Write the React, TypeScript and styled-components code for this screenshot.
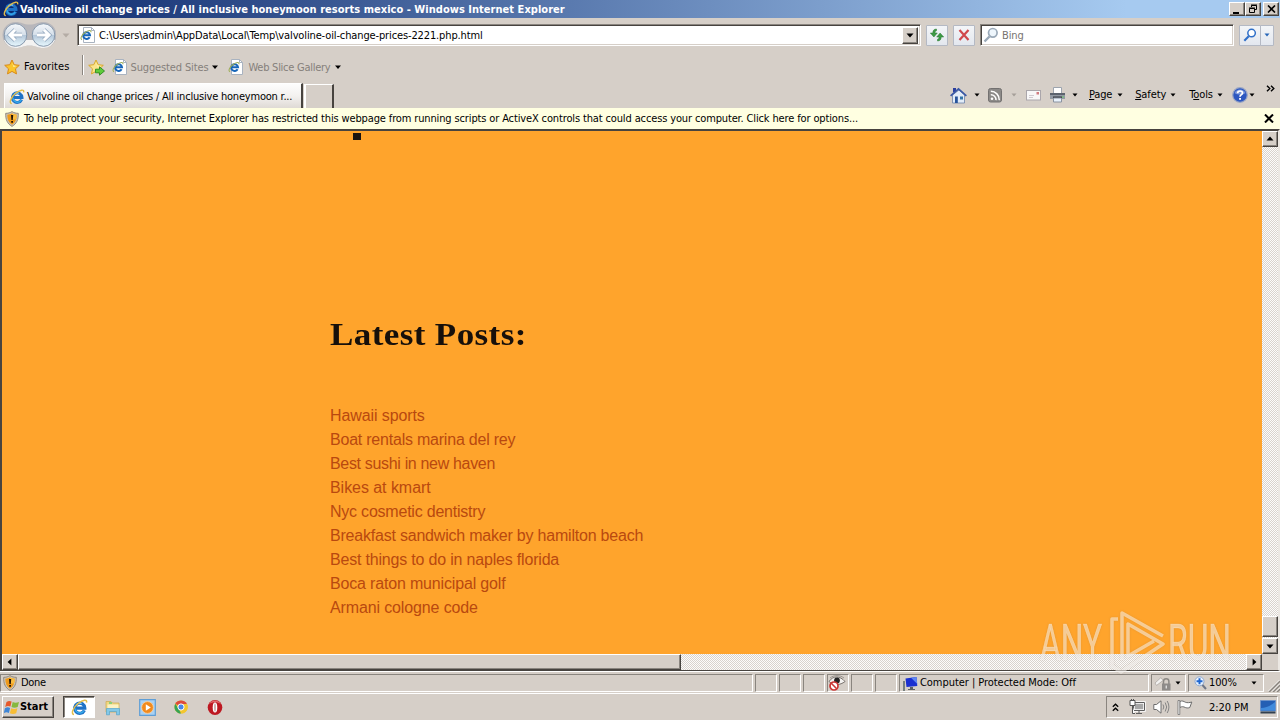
import React from "react";
import styled, { createGlobalStyle, css } from "styled-components";

const FACE = "#d6cfc8";
const DARK = "#47433f";
const MID = "#8a857f";
const UI = `"DejaVu Sans Condensed", "DejaVu Sans", sans-serif`;

const Global = createGlobalStyle`
  body { margin: 0; background: ${FACE}; overflow: hidden; }
  * { box-sizing: border-box; }
  svg { display: block; flex: none; }
`;

const Desktop = styled.div`
  position: relative;
  width: 1280px;
  height: 720px;
  overflow: hidden;
  display: flex;
  flex-direction: column;
  background: ${FACE};
  font: 11px/14px ${UI};
  color: #000;
`;

const raised = css`
  background: ${FACE};
  border: 1px solid;
  border-color: #fff ${DARK} ${DARK} #fff;
  box-shadow: inset -1px -1px 0 ${MID};
`;

const Label = styled.span<{ $ls?: number; $ml?: number; $drop?: number; $color?: string; $bold?: boolean }>`
  white-space: pre;
  flex: none;
  letter-spacing: ${(p) => p.$ls ?? -0.12}px;
  margin-left: ${(p) => p.$ml ?? 0}px;
  padding-top: ${(p) => p.$drop ?? 0}px;
  color: ${(p) => p.$color ?? "inherit"};
  font-weight: ${(p) => (p.$bold ? 700 : 400)};
`;

const Slot = styled.span<{ $ml?: number; $mt?: number }>`
  flex: none;
  margin-left: ${(p) => p.$ml ?? 0}px;
  margin-top: ${(p) => p.$mt ?? 0}px;
`;

const TitleBar = styled.div`
  height: 18px;
  flex: none;
  display: flex;
  align-items: center;
  padding: 0 1px 0 3px;
  background: linear-gradient(90deg, #0c286c 0%, #a6caf0 88%, #a6caf0 100%);
  color: #fff;
`;
const WindowButtons = styled.div`
  margin-left: auto;
  display: flex;
`;
const WindowButton = styled.div<{ $gap?: boolean }>`
  ${raised}
  width: 16px;
  height: 14px;
  margin-left: ${(p) => (p.$gap ? 2 : 0)}px;
  display: flex;
  align-items: center;
  justify-content: center;
`;

const AddressRow = styled.div`
  height: 34px;
  flex: none;
  display: flex;
  align-items: center;
  padding-left: 2px;
`;
const Field = styled.div<{ $w: number; $ml: number }>`
  width: ${(p) => p.$w}px;
  height: 22px;
  margin-left: ${(p) => p.$ml}px;
  flex: none;
  display: flex;
  align-items: center;
  background: #fff;
  border: 1px solid;
  border-color: ${MID} #fff #fff ${MID};
  box-shadow: inset 1px 1px 0 ${DARK}, inset -1px -1px 0 ${FACE};
  padding: 2px 2px 2px 2px;
`;
const DropButton = styled.div`
  ${raised}
  width: 16px;
  height: 17px;
  margin-left: auto;
  display: flex;
  align-items: center;
  justify-content: center;
`;
const NavButton = styled.div<{ $w: number; $ml: number }>`
  width: ${(p) => p.$w}px;
  height: 21px;
  margin-left: ${(p) => p.$ml}px;
  flex: none;
  display: flex;
  align-items: center;
  justify-content: center;
  background: linear-gradient(#f3f5f8, #e3e7ee);
  border: 1px solid #b4b9c4;
  border-radius: 1px;
`;

const FavoritesRow = styled.div`
  height: 30px;
  flex: none;
  display: flex;
  align-items: center;
  padding-left: 4px;
`;
const Divider = styled.div`
  width: 2px;
  height: 20px;
  margin: -4px 4px 0 8px;
  border-left: 1px solid ${MID};
  border-right: 1px solid #fff;
`;

const TabRow = styled.div`
  height: 26px;
  flex: none;
  display: flex;
  align-items: flex-end;
  padding-left: 4px;
`;
const Tab = styled.div`
  width: 299px;
  height: 25px;
  display: flex;
  align-items: center;
  padding: 1px 0 0 4px;
  background: linear-gradient(#fdfdfd, #f3f1ef 50%, #dfdad5);
  border-left: 1px solid #fff;
  border-top: 1px solid #fff;
  border-right: 2px solid ${DARK};
`;
const NewTab = styled.div`
  width: 30px;
  height: 24px;
  margin-left: 1px;
  border: 1px solid #fff;
  border-left-width: 2px;
  border-bottom: 0;
  border-right: 2px solid ${DARK};
`;
const CommandBar = styled.div`
  height: 26px;
  margin-left: 616px;
  display: flex;
  align-items: center;
`;

const InfoBar = styled.div`
  height: 21px;
  flex: none;
  display: flex;
  align-items: center;
  padding: 0 6px 0 5px;
  background: #ffffe1;
`;
const CloseMark = styled.div`
  margin-left: auto;
`;

const Viewport = styled.div`
  height: 542px;
  flex: none;
  display: grid;
  grid-template-columns: 1260px 16px;
  grid-template-rows: 523px 16px;
  border-top: 2px solid ${DARK};
  border-left: 2px solid ${DARK};
  border-right: 2px solid #ece8e3;
  border-bottom: 1px solid ${DARK};
`;
const Page = styled.div`
  background: #ffa42c;
  padding-left: 328px;
  overflow: hidden;
`;
const Bullet = styled.div`
  width: 8px;
  height: 7px;
  margin: 2px 0 0 23px;
  background: #1a1410;
`;
const Heading = styled.h2`
  width: max-content;
  margin: 175px 0 0;
  font: bold 31.5px/40px "Liberation Serif", Georgia, serif;
  letter-spacing: 0.35px;
  transform: scaleX(1.112);
  transform-origin: left;
  color: #17100b;
  white-space: nowrap;
`;
const Posts = styled.div`
  margin-top: 49px;
  display: flex;
  flex-direction: column;
  font: 16px/24px "Liberation Sans", Arial, sans-serif;
`;
const Post = styled.a<{ $ls: number }>`
  letter-spacing: ${(p) => p.$ls}px;
  color: #b9490f;
  white-space: nowrap;
`;

const Track = styled.div<{ $vertical?: boolean }>`
  display: flex;
  flex-direction: ${(p) => (p.$vertical ? "column" : "row")};
  background: conic-gradient(#fdfcfb 25%, #d9d3cd 0 50%, #fdfcfb 0 75%, #d9d3cd 0) 0 0 / 2px 2px;
`;
const ScrollPiece = styled.div<{ $w?: number; $h?: number; $before?: number }>`
  ${raised}
  flex: none;
  width: ${(p) => p.$w ?? 16}px;
  height: ${(p) => p.$h ?? 16}px;
  margin-top: ${(p) => p.$before ?? 0}px;
  display: flex;
  align-items: center;
  justify-content: center;
`;
const Spacer = styled.div`
  flex: 1;
`;

const StatusBar = styled.div`
  height: 23px;
  flex: none;
  display: flex;
  gap: 2px;
  padding: 2px 0 1px;
  border-top: 1px solid #fff;
  border-bottom: 1px solid #fff;
`;
const Pane = styled.div<{ $w: number }>`
  width: ${(p) => p.$w}px;
  height: 18px;
  flex: none;
  display: flex;
  align-items: center;
  border: 1px solid;
  border-color: ${MID} #fff #fff ${MID};
  padding-left: 2px;
`;

const TaskBar = styled.div`
  flex: 1;
  display: flex;
  align-items: flex-start;
  padding: 2px 2px 0;
`;
const StartButton = styled.div`
  ${raised}
  width: 52px;
  height: 22px;
  display: flex;
  align-items: center;
  padding-left: 1px;
`;
const ActiveTask = styled.div`
  width: 32px;
  height: 22px;
  margin-left: 9px;
  display: flex;
  align-items: center;
  justify-content: center;
  background: #fff;
  border: 1px solid;
  border-color: ${DARK} #fff #fff ${DARK};
  box-shadow: inset 1px 1px 0 ${MID};
`;
const Pinned = styled.div`
  display: flex;
  align-items: center;
  height: 22px;
  gap: 17px;
  margin-left: 9px;
`;
const Tray = styled.div`
  width: 172px;
  height: 22px;
  margin-left: auto;
  display: flex;
  align-items: center;
  border: 1px solid;
  border-color: ${MID} #fff #fff ${MID};
  padding-left: 5px;
`;

const Watermark = styled.svg`
  position: absolute;
  left: 1036px;
  top: 606px;
  overflow: visible;
  filter: drop-shadow(0 0 1px rgba(120, 90, 60, 0.35));
`;

const Arrow = ({ color = "#000", w = 5, dir = "down" }: { color?: string; w?: number; dir?: string }) => {
  const rot: Record<string, number> = { down: 0, left: 90, up: 180, right: 270 };
  return (
    <svg width="8" height="8" viewBox="0 0 8 8">
      <path d={`M${4 - w / 2} 2.6h${w}l${-w / 2} ${w / 2 + 0.3}z`} fill={color} transform={`rotate(${rot[dir]} 4 4)`} />
    </svg>
  );
};

const IeGlyph = ({ size = 16 }: { size?: number }) => (
  <svg width={size} height={size} viewBox="0 0 16 16" fill="none">
    <path d="M12.6 10.6A4.8 4.8 0 1 1 13 8.6H5" stroke="#1f72c6" strokeWidth="3" />
    <path d="M12.2 11A4.4 4.4 0 0 1 4 9" stroke="#36aaea" strokeWidth="1.300" />
    <path d="M5 5.6a4.4 4.4 0 0 1 5-1.3" stroke="#8ad4f7" strokeWidth="1.100" />
    <path d="M2.8 14.6C-.6 14.2 2.2 7.6 7 4 11 .9 15.6-.2 14.6 3.4" stroke="#e3bd4a" strokeWidth="1.400" />
  </svg>
);
const PageIe = () => (
  <svg width="16" height="16" viewBox="0 0 16 16" fill="none">
    <path d="M3.500.5h8l3 3v12h-11z" fill="#fff" stroke="#a9b3c0" />
    <path d="M11.5.5v3h3" stroke="#a9b3c0" />
    <path d="M9.6 10.2A3.4 3.4 0 1 1 10 8.2H4" stroke="#1766b9" strokeWidth="2" />
    <path d="M2 12.6C-.4 12 2 7.6 5 5.5 8 3.4 11.8 2.5 10.8 5.3" stroke="#9fae58" strokeWidth="1.100" />
  </svg>
);
const NavCircles = () => (
  <svg width="54" height="28" viewBox="0 0 54 28">
    <defs>
      <linearGradient id="orb" x1="0" y1="0" x2="0" y2="1">
        <stop offset="0" stopColor="#f5f8fb" />
        <stop offset=".48" stopColor="#d5dfe9" />
        <stop offset=".52" stopColor="#b5c8da" />
        <stop offset="1" stopColor="#e8f8fe" />
      </linearGradient>
    </defs>
    <path d="M13.5 1C20 1 21 3.6 27.500 3.600S35 1 41.500 1a13 13 0 0 1 0 26C35 27 34 24.500 27.500 24.500S20 27 13.500 27a13 13 0 0 1 0-26z" fill="#b8b7bb" />
    <path d="M2 19a13 13 0 0 0 11.500 8c6.500 0 7.500-2.500 14-2.500s7.500 2.500 14 2.500A13 13 0 0 0 53 19z" fill="#f4f3f2" />
    {[13.5, 41.5].map((cx, i) => (
      <g key={cx}>
        <circle cx={cx} cy="14" r="11.300" fill="url(#orb)" stroke="#8799ad" />
        <g transform={i ? `translate(${cx} 14)` : `translate(${cx} 14) scale(-1 1)`}>
          <path d="M-6.500 0H5M.3-5.200L5.600 0 .3 5.200" stroke="#8ba1b9" strokeWidth="4.300" fill="none" />
          <path d="M-6.500 0H5M.3-5.200L5.600 0 .3 5.200" stroke="#fff" strokeWidth="3" fill="none" />
        </g>
      </g>
    ))}
  </svg>
);
const Star = ({ add }: { add?: boolean }) => (
  <svg width="17" height="17" viewBox="0 0 17 17">
    <path d="M8 1l2.200 4.700 5.100.6-3.800 3.500 1 5.100L8 12.400l-4.500 2.500 1-5.100L.7 6.300l5.100-.6z" fill={add ? "#fbe48c" : "#fbc52c"} stroke={add ? "#d9a92c" : "#d98a1a"} />
    <path d="M8 3.500l1.500 3 3 .4-3 1.200z" fill="#fff3b0" />
    {add && <path d="M7.500 10.200h4V7.800l5 4.200-5 4.200v-2.400h-4z" fill="#5ecb3a" stroke="#2b8a20" strokeWidth=".9" />}
  </svg>
);
const Shield = () => (
  <svg width="14" height="16" viewBox="0 0 14 16">
    <path d="M7 .6c2 1.300 4 1.700 6.300 1.700.3 6-1.500 10.500-6.300 13.100C2.200 12.800.4 8.300.7 2.300 3 2.300 5 1.900 7 .6z" fill="#c9c3ba" stroke="#847a6c" strokeWidth=".8" />
    <path d="M7 2.300c1.600 1 3 1.300 4.700 1.400C11.800 8.500 10.300 11.800 7 13.800 3.700 11.800 2.200 8.500 2.300 3.700 4 3.600 5.400 3.300 7 2.300z" fill="#ee9a1c" />
    <path d="M7 2.300c1.600 1 3 1.300 4.700 1.400 0 2-.2 3.400-.7 4.800H7z" fill="#f9bd41" />
    <path d="M6 4h2.200l-.4 5H6.400zM6.200 10h1.800v1.800H6.200z" fill="#241505" />
  </svg>
);
const Magnifier = ({ size, color, glass = "none" }: { size: number; color: string; glass?: string }) => (
  <svg width={size} height={size} viewBox="0 0 16 16" fill="none">
    <path d="M1.500 14.500L6.500 9.500" stroke={color} strokeWidth="2.400" />
    <circle cx="9.800" cy="5.800" r="4.300" fill={glass} stroke={color} strokeWidth="1.700" />
  </svg>
);
const Refresh = () => (
  <svg width="16" height="14" viewBox="0 0 16 14">
    <path d="M7.500 1C5 1 3.800 2.500 3.800 5H1.300l3.600 4L8.300 5H6c0-1.400.4-2 1.500-2.300z" fill="#3d9a45" stroke="#2b7a35" strokeWidth=".5" />
    <path d="M8.500 13c2.500 0 3.700-1.500 3.700-4h2.500l-3.600-4L7.700 9H10c0 1.400-.4 2-1.500 2.300z" fill="#3d9a45" stroke="#2b7a35" strokeWidth=".5" />
  </svg>
);
const HomeIcon = () => (
  <svg width="17" height="17" viewBox="0 0 17 17">
    <path d="M3 1h3v4H3z" fill="#2b3f9e" />
    <path d="M2.500 8L9 3l5.500 5v8h-12z" fill="#e2ecf8" stroke="#6c83a8" strokeWidth=".8" />
    <path d="M.6 8.800L8.500 1.800l7.900 7" stroke="#3a59a6" strokeWidth="1.700" fill="none" />
    <path d="M5 9.500h2.800V16H5z" fill="#27549b" />
    <path d="M10 9.500h3v3h-3z" fill="#3474a8" />
  </svg>
);
const RssIcon = () => (
  <svg width="14" height="15" viewBox="0 0 14 15" fill="none">
    <rect x=".5" y=".5" width="13" height="13.500" rx="2" fill="#8c8a88" stroke="#737170" />
    <circle cx="4" cy="10.800" r="1.300" fill="#fff" />
    <path d="M2.800 6.800a5 5 0 0 1 5.200 5.300M2.800 3.300a8.500 8.500 0 0 1 8.500 8.800" stroke="#fff" strokeWidth="1.500" />
  </svg>
);
const MailIcon = () => (
  <svg width="15" height="11" viewBox="0 0 15 11">
    <rect x=".5" y=".5" width="14" height="9.500" fill="#f8f7f8" stroke="#aaa6ab" />
    <path d="M10.500 2h2.500v2.500h-2.500z" fill="#d17b80" />
    <path d="M3 5.500h5M3 7.500h4" stroke="#cfc9cf" />
  </svg>
);
const PrinterIcon = () => (
  <svg width="17" height="16" viewBox="0 0 17 16">
    <path d="M4.500.5h8v6h-8z" fill="#fff" stroke="#9da4ae" />
    <path d="M1 6h15v6H1z" fill="#9299a3" />
    <path d="M1 6h15v2H1z" fill="#5c636e" />
    <path d="M13 9.500h2v1h-2z" fill="#6fd06a" />
    <path d="M4 9.500h9v2H4z" fill="#30353d" />
    <path d="M4.500 11h8v4h-8z" fill="#e8f1fb" stroke="#8a93a0" />
  </svg>
);
const HelpIcon = () => (
  <svg width="16" height="16" viewBox="0 0 16 16" fill="none">
    <circle cx="8" cy="8" r="7.300" fill="#2c57c0" stroke="#9aa6c4" strokeWidth="1.200" />
    <path d="M2.500 6a6 6 0 0 1 11 0c-3 2-8 2-11 0z" fill="#7794da" />
    <path d="M5.600 6.300c0-3 4.900-3 4.900-.3C10.500 7.600 8 7.800 8 9.800" stroke="#fff" strokeWidth="1.700" />
    <path d="M7.100 11h1.900v1.800H7.100z" fill="#fff" />
  </svg>
);
const EyeBlocked = () => (
  <svg width="18" height="16" viewBox="0 0 18 16" fill="none">
    <path d="M1 6.500C5 .5 12 .5 17 6.500 12 10.500 6 10.500 1 6.500z" fill="#f4f2f0" stroke="#77716c" />
    <path d="M2 3C6-.2 12-.2 16 3" stroke="#99938e" />
    <circle cx="9" cy="5.500" r="2.900" fill="#222" />
    <circle cx="6" cy="11" r="4" fill="#fff" stroke="#cc3634" strokeWidth="1.700" />
    <path d="M3.300 8.300l5.400 5.400" stroke="#cc3634" strokeWidth="1.600" />
  </svg>
);
const ComputerIcon = () => (
  <svg width="16" height="15" viewBox="0 0 16 15">
    <path d="M1 5h2v10H1z" fill="#77807f" />
    <path d="M3.500 2.500L14.500 1l.8 9L4.500 11z" fill="#1a2fd0" />
    <path d="M9 1.800L14.500 1l.8 7z" fill="#5f86f2" />
    <path d="M8 11h3v2h2v1H6v-1h2z" fill="#5b6066" />
  </svg>
);
const LockIcon = () => (
  <svg width="18" height="15" viewBox="0 0 18 15" fill="none">
    <path d="M1 7l6-5.500 2 3-6.500 5z" fill="#f2f1f0" stroke="#b8b3ae" />
    <path d="M9.500 8V5.500a2.700 2.700 0 0 1 5.400 0V8" stroke="#8b8884" strokeWidth="1.500" />
    <path d="M8 7.500h8.500v7H8z" fill="#8e8b89" />
    <path d="M11.700 9.500h1v3h-1z" fill="#fff" />
  </svg>
);
const ZoomIcon = () => (
  <svg width="13" height="14" viewBox="0 0 13 14" fill="none">
    <path d="M8 8.500l4 4.500" stroke="#6f7686" strokeWidth="2" />
    <circle cx="5.500" cy="5.300" r="4.500" fill="#eaf3fd" stroke="#8fa8cf" />
    <path d="M5.500 2.300v6M2.500 5.300h6" stroke="#1f66d0" strokeWidth="2" />
  </svg>
);
const Grip = () => (
  <svg width="12" height="12" viewBox="0 0 12 12">
    <path d="M1 12L12 1M5 12l7-7M9 12l3-3" stroke="#8b8680" strokeWidth="1.600" />
    <path d="M0 11.500L11.500 0M4 11.500L12 3.500M8 11.500l4-4" stroke="#fff" strokeWidth=".8" />
  </svg>
);
const WindowsFlag = () => (
  <svg width="16" height="15" viewBox="0 0 16 15">
    <path d="M2.500 2C4.500.6 6 .8 7.600 1.600L6.400 6.600C4.800 5.900 3 5.900 1.200 7z" fill="#e6592b" />
    <path d="M8.700 2C10.500 3 12.500 3 15 2l-1.300 5c-2.200 1-4.300 1-6.200 0z" fill="#86b83e" />
    <path d="M.9 8.200c2-1.200 3.600-1 5.200-.3l-1.200 5C3.200 12 1.600 12-.2 13z" fill="#3f86d6" />
    <path d="M7.200 8.300c1.900 1 3.900 1 6.200 0l-1.200 5c-2.300 1-4.300.9-6.300 0z" fill="#f7bd35" />
  </svg>
);
const FolderIcon = () => (
  <svg width="18" height="17" viewBox="0 0 18 17">
    <path d="M2 2.500h5l1.500 1.500H15v9H2z" fill="#f1d881" stroke="#d0ae58" strokeWidth=".8" />
    <path d="M3.500 5.500h11v5h-11z" fill="#fbf2c4" />
    <path d="M5 3h3v2H5z" fill="#8dcf79" />
    <path d="M2.500 9.500h13v6.300h-3v-3.300h-7v3.300h-3z" fill="#82c8e8" stroke="#55a5cd" strokeWidth=".7" />
  </svg>
);
const PlayerIcon = () => (
  <svg width="17" height="17" viewBox="0 0 17 17">
    <path d="M.7.7h15.600v15.600H.7z" fill="#a9d1f3" stroke="#5f9ed6" strokeWidth="1.200" />
    <circle cx="8.500" cy="8.500" r="5.900" fill="#f18a1d" stroke="#fbd3a2" strokeWidth=".8" />
    <path d="M6.800 5.300l5 3.200-5 3.200z" fill="#fff" />
  </svg>
);
const ChromeIcon = () => (
  <svg width="16" height="16" viewBox="0 0 16 16">
    <circle cx="8" cy="8" r="6.600" fill="#f3c62e" />
    <path d="M2.300 4.700A6.600 6.600 0 0 1 13.700 4.700L8 8z" fill="#dd4a3c" />
    <path d="M2.300 4.700L6 10.500l2 4.100A6.600 6.600 0 0 1 2.300 4.700z" fill="#36a355" />
    <path d="M6 4.700h7.700l-3 5.500z" fill="#dd4a3c" />
    <path d="M8 5h6.100A6.600 6.600 0 0 1 8 14.600l3-5z" fill="#f3c62e" />
    <circle cx="8" cy="8" r="3.100" fill="#4987e8" stroke="#fff" />
  </svg>
);
const OperaIcon = () => (
  <svg width="16" height="17" viewBox="0 0 16 17">
    <ellipse cx="8" cy="8.500" rx="7.300" ry="7.600" fill="#bd1821" />
    <path d="M2 5a7 7 0 0 1 12 0C10 2.500 6 2.500 2 5z" fill="#e2686b" />
    <ellipse cx="8" cy="8.500" rx="2.300" ry="5.100" fill="#fff" />
    <ellipse cx="8" cy="8.500" rx=".9" ry="4.200" fill="#c9a9a8" />
  </svg>
);
const NetworkIcon = () => (
  <svg width="17" height="16" viewBox="0 0 17 16" fill="none">
    <path d="M4.500 3.500h11v8h-11z" fill="#a7a7a7" stroke="#fff" strokeWidth="2.500" />
    <path d="M4.500 3.500h11v8h-11zM7 14.500h6M10 12v2" stroke="#5e5e5e" />
    <path d="M1 1.500h5v5H1zM3.500 7v7.500H6" fill="#fff" stroke="#555" />
    <path d="M2.500 0v2M4.500 0v2" stroke="#555" />
  </svg>
);
const SpeakerIcon = () => (
  <svg width="17" height="14" viewBox="0 0 17 14" fill="none">
    <path d="M.8 4.500h2.700L8 .8v12.400L3.500 9.500H.8z" fill="#fff" stroke="#6d6d6d" />
    <path d="M10 4.500q1.600 2.500 0 5M12.200 2.500q3 4.500 0 9M14.200 1q3.500 6 0 12" stroke="#858585" />
  </svg>
);
const FlagIcon = () => (
  <svg width="16" height="15" viewBox="0 0 16 15">
    <path d="M2.800 1.500c2.500-1.300 4 0 5.500.7 2 .8 4 .5 6.500-.2l-2 5.500c-2 .8-3.500.4-4.500 0-2-1-3.300-1.200-5.500 0z" fill="#fff" stroke="#6d6d6d" />
    <path d="M1 .5h1.800v14H1z" fill="#fff" stroke="#6d6d6d" strokeWidth=".8" />
  </svg>
);
const DesktopIcon = () => (
  <svg width="16" height="14" viewBox="0 0 16 14">
    <path d="M.5.500h15v10.500H.5z" fill="#245fb4" stroke="#6f93c8" />
    <path d="M1 8c5 0 9-2 14-6v8.500H1z" fill="#418bdc" />
    <path d="M.5 11.500h15v2H.5z" fill="#33404f" />
  </svg>
);

const posts: [string, number][] = [
  ["Hawaii sports", -0.1],
  ["Boat rentals marina del rey", -0.22],
  ["Best sushi in new haven", -0.33],
  ["Bikes at kmart", -0.05],
  ["Nyc cosmetic dentistry", -0.22],
  ["Breakfast sandwich maker by hamilton beach", -0.21],
  ["Best things to do in naples florida", -0.19],
  ["Boca raton municipal golf", -0.17],
  ["Armani cologne code", -0.13],
];

export default function App() {
  return (
    <Desktop>
      <Global />
      <TitleBar>
        <IeGlyph />
        <Label $bold $ls={0.03} $ml={1} $drop={1}>Valvoline oil change prices / All inclusive honeymoon resorts mexico - Windows Internet Explorer</Label>
        <WindowButtons>
          <WindowButton><svg width="10" height="9"><path d="M1 7h6v2H1z" /></svg></WindowButton>
          <WindowButton><svg width="10" height="10" fill="none" stroke="#000"><path d="M3.500 3V1.500h5v4H7M3 1h6M1.500 4.500h5v4h-5zM1 4h6" /></svg></WindowButton>
          <WindowButton $gap><svg width="9" height="8" stroke="#000" strokeWidth="1.600"><path d="M1 .5l7 7M8 .5l-7 7" /></svg></WindowButton>
        </WindowButtons>
      </TitleBar>

      <AddressRow>
        <NavCircles />
        <Slot $ml={6}><Arrow color="#b4aca5" w={7} /></Slot>
        <Field $w={844} $ml={7}>
          <PageIe />
          <Label $ml={3} $ls={-0.13} $drop={2}>C:\Users\admin\AppData\Local\Temp\valvoline-oil-change-prices-2221.php.html</Label>
          <DropButton><Arrow w={7} /></DropButton>
        </Field>
        <NavButton $w={22} $ml={5}><Refresh /></NavButton>
        <NavButton $w={22} $ml={5}>
          <svg width="12" height="12"><path d="M1.500 1l9 10M10.500 1l-9 10" stroke="#d0474c" strokeWidth="2.200" /></svg>
        </NavButton>
        <Field $w={254} $ml={5}>
          <Magnifier size={16} color="#9aa9b8" glass="#eef6fc" />
          <Label $ml={3} $color="#77736f" $drop={2}>Bing</Label>
        </Field>
        <NavButton $w={22} $ml={5}><Magnifier size={14} color="#2f6fc8" glass="#fff" /></NavButton>
        <NavButton $w={14} $ml={-1}><Arrow color="#2766b8" /></NavButton>
      </AddressRow>

      <FavoritesRow>
        <Star />
        <Label $ml={3} $ls={0.1}>Favorites</Label>
        <Slot $ml={4}><Divider /></Slot>
        <Star add />
        <Slot $ml={7}><PageIe /></Slot>
        <Label $ml={3} $color="#85807b" $ls={-0.13} $drop={1}>Suggested Sites</Label>
        <Slot $ml={3}><Arrow w={6} /></Slot>
        <Slot $ml={9}><PageIe /></Slot>
        <Label $ml={4} $color="#85807b" $ls={-0.26} $drop={1}>Web Slice Gallery</Label>
        <Slot $ml={4}><Arrow w={6} /></Slot>
      </FavoritesRow>

      <TabRow>
        <Tab>
          <IeGlyph />
          <Label $ml={2} $ls={-0.21}>Valvoline oil change prices / All inclusive honeymoon r...</Label>
        </Tab>
        <NewTab />
        <CommandBar>
          <HomeIcon />
          <Slot $ml={6}><Arrow /></Slot>
          <Slot $ml={7}><RssIcon /></Slot>
          <Slot $ml={8}><Arrow color="#a69f99" /></Slot>
          <Slot $ml={8}><MailIcon /></Slot>
          <Slot $ml={8}><PrinterIcon /></Slot>
          <Slot $ml={5}><Arrow /></Slot>
          <Label $ml={10} $ls={-0.2}><u>P</u>age</Label>
          <Slot $ml={4}><Arrow /></Slot>
          <Label $ml={11} $ls={-0.1}><u>S</u>afety</Label>
          <Slot $ml={3}><Arrow /></Slot>
          <Label $ml={12} $ls={-0.1}>T<u>o</u>ols</Label>
          <Slot $ml={3}><Arrow /></Slot>
          <Slot $ml={8}><HelpIcon /></Slot>
          <Slot $ml={0}><Arrow /></Slot>
          <Slot $ml={10} $mt={-14}>
            <svg width="9" height="7" fill="none" stroke="#000" strokeWidth="1.400"><path d="M1 .8l2.800 2.700L1 6.200M5 .8l2.800 2.700L5 6.200" /></svg>
          </Slot>
        </CommandBar>
      </TabRow>

      <InfoBar>
        <Shield />
        <Label $ml={5} $ls={-0.135} $drop={1}>To help protect your security, Internet Explorer has restricted this webpage from running scripts or ActiveX controls that could access your computer. Click here for options...</Label>
        <CloseMark><svg width="10" height="9" stroke="#000" strokeWidth="2"><path d="M1 .5l8 8M9 .5l-8 8" /></svg></CloseMark>
      </InfoBar>

      <Viewport>
        <Page>
          <Bullet />
          <Heading>Latest Posts:</Heading>
          <Posts>
            {posts.map(([text, ls]) => <Post key={text} $ls={ls}>{text}</Post>)}
          </Posts>
        </Page>
        <Track $vertical>
          <ScrollPiece><Arrow dir="up" w={7} /></ScrollPiece>
          <Spacer />
          <ScrollPiece $h={21} />
          <ScrollPiece $before={1}><Arrow w={7} /></ScrollPiece>
        </Track>
        <Track>
          <ScrollPiece><Arrow dir="left" w={7} /></ScrollPiece>
          <ScrollPiece $w={663} />
          <Spacer />
          <ScrollPiece><Arrow dir="right" w={7} /></ScrollPiece>
        </Track>
      </Viewport>

      <StatusBar>
        <Pane $w={753}><Shield /><Label $ml={4} $ls={-0.3}>Done</Label></Pane>
        <Pane $w={22} />
        <Pane $w={22} />
        <Pane $w={22} />
        <Pane $w={22}><Slot $ml={-2}><EyeBlocked /></Slot></Pane>
        <Pane $w={22} />
        <Pane $w={22} />
        <Pane $w={250}><ComputerIcon /><Label $ml={2} $ls={-0.05}>Computer | Protected Mode: Off</Label></Pane>
        <Pane $w={35}><LockIcon /><Slot $ml={2}><Arrow /></Slot></Pane>
        <Pane $w={76}><Slot $ml={3}><ZoomIcon /></Slot><Label $ml={2} $ls={-0.15}>100%</Label><Slot $ml={13}><Arrow /></Slot></Pane>
        <Slot $ml={2} $mt={6}><Grip /></Slot>
      </StatusBar>

      <TaskBar>
        <StartButton><WindowsFlag /><Label $bold $ls={-0.05} $ml={0}>Start</Label></StartButton>
        <ActiveTask><IeGlyph size={17} /></ActiveTask>
        <Pinned><FolderIcon /><PlayerIcon /><ChromeIcon /><Slot $ml={1}><OperaIcon /></Slot></Pinned>
        <Tray>
          <svg width="7" height="9" fill="none" stroke="#000" strokeWidth="1.300"><path d="M.8 3.800L3.500 1.200l2.700 2.600M.8 7.800l2.700-2.600 2.700 2.600" /></svg>
          <Slot $ml={10}><NetworkIcon /></Slot>
          <Slot $ml={7}><SpeakerIcon /></Slot>
          <Slot $ml={7}><FlagIcon /></Slot>
          <Label $ml={16} $ls={-0.05} $drop={1}>2:20 PM</Label>
          <Slot $ml={11}><DesktopIcon /></Slot>
        </Tray>
      </TaskBar>

      <Watermark width="204" height="80" viewBox="0 0 204 80">
        <g fill="#fff" fillOpacity=".5" stroke="#fff" strokeOpacity=".3" strokeWidth=".6" fontFamily="Roboto, sans-serif" fontSize="50">
          <text x="4" y="54" textLength="62" lengthAdjust="spacingAndGlyphs">ANY</text>
          <text x="132" y="54" textLength="63" lengthAdjust="spacingAndGlyphs">RUN</text>
        </g>
        <g fill="none" stroke="#fff" strokeOpacity=".5" strokeWidth="3.500" strokeLinejoin="round">
          <path d="M86 54V7L127 30" />
          <path d="M82 13H76V60L85 66L127 38L92 18V50L118 35" />
        </g>
      </Watermark>
    </Desktop>
  );
}
